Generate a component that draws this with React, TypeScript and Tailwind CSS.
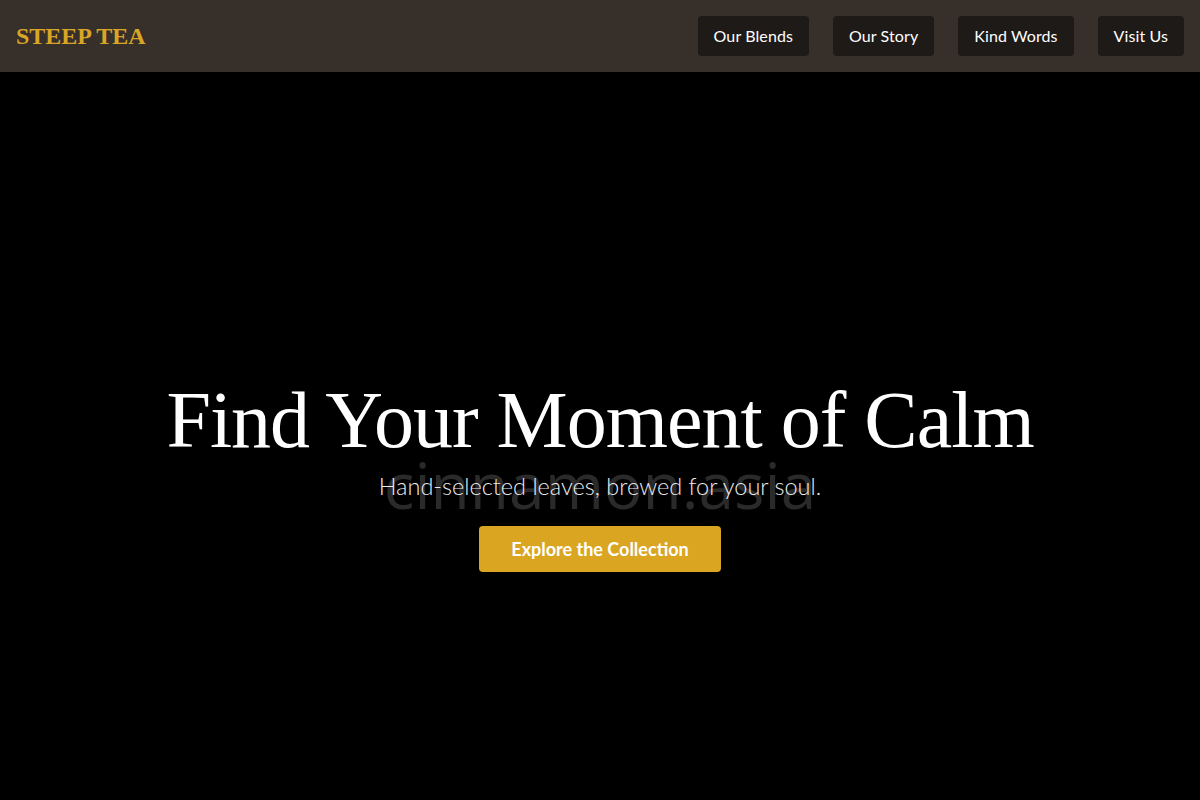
import React from "react";

const links = ["Our Blends", "Our Story", "Kind Words", "Visit Us"];

export default function App() {
  return (
    <div className="min-h-screen bg-black" style={{ fontFamily: "Lato, 'Noto Sans', sans-serif" }}>
      <header className="flex h-[72px] items-center justify-between bg-[#372f2a] px-4">
        <div
          className="text-[24px] font-bold leading-none text-[#d9a526]"
          style={{ fontFamily: "'Liberation Serif', 'Times New Roman', serif" }}
        >
          STEEP TEA
        </div>
        <nav className="flex gap-6">
          {links.map((l) => (
            <a
              key={l}
              href="#"
              className="rounded bg-[#1e1a17] px-4 py-2 text-base leading-6 tracking-[0.1px] text-white"
            >
              {l}
            </a>
          ))}
        </nav>
      </header>

      <section className="relative flex h-[800px] flex-col items-center justify-center bg-black text-center">
        <div className="relative z-10 flex flex-col items-center">
          <h1
            className="text-[80px] font-normal leading-[1.2] tracking-[-1px] text-white"
            style={{ fontFamily: "'Liberation Serif', 'Times New Roman', serif" }}
          >
            Find Your Moment of Calm
          </h1>
          <div className="relative">
            {/* faint brand mark sitting behind the tagline */}
            <span
              aria-hidden
              className="pointer-events-none absolute left-1/2 top-[-15px] -translate-x-1/2 whitespace-nowrap text-[64px] leading-none text-[#2a2a2a]"
              style={{ fontFamily: "'Open Sans', 'Noto Sans', sans-serif" }}
            >
              cinnamon.asia
            </span>
            <p className="relative text-[23.5px] font-light leading-9 text-[#ececec]">
              Hand-selected leaves, brewed for your soul.
            </p>
          </div>
          <button className="mt-[22px] rounded-sm bg-[#daa520] px-8 py-[9px] text-lg font-bold leading-7 text-white">
            Explore the Collection
          </button>
        </div>
      </section>
    </div>
  );
}
